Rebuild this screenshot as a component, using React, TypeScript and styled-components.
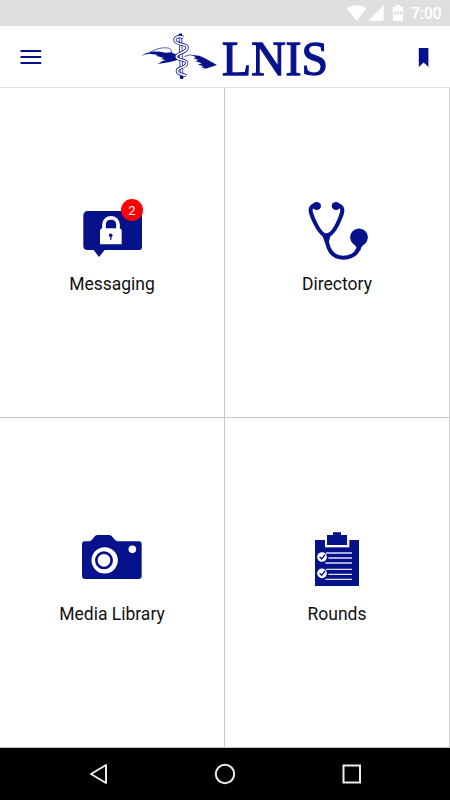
import React from "react";
import styled, { createGlobalStyle } from "styled-components";

const NAVY = "#06118c";

const GlobalStyle = createGlobalStyle`
  * { box-sizing: border-box; }
  body { margin: 0; background: #fff; font-family: Roboto, sans-serif; }
  svg { display: block; }
`;

const Screen = styled.div`
  width: 450px;
  height: 800px;
  display: flex;
  flex-direction: column;
  overflow: hidden;
  background: #fff;
`;

const StatusBar = styled.div`
  height: 26px;
  flex: none;
  display: flex;
  justify-content: flex-end;
  align-items: center;
  padding-right: 9px;
  background: #dfdfdf;
  color: #fff;
`;

const Clock = styled.span`
  font-size: 15.6px;
  font-weight: 500;
  line-height: 26px;
  padding-top: 2px;
  width: 30px;
  white-space: nowrap;
`;

const Header = styled.header`
  height: 62px;
  flex: none;
  display: grid;
  grid-template-columns: 135px 200px 1fr;
  align-items: center;
  border-bottom: 1px solid #dfdfdf;
`;

const IconButton = styled.button<{ $end?: boolean }>`
  height: 60px;
  padding: 0 20px;
  border: 0;
  background: none;
  display: flex;
  align-items: center;
  justify-content: ${(p) => (p.$end ? "flex-end" : "flex-start")};
`;

const Tiles = styled.main`
  height: 660px;
  flex: none;
  display: grid;
  grid-template-columns: 225px 225px;
  grid-template-rows: 330px 330px;
`;

const Tile = styled.div`
  display: flex;
  flex-direction: column;
  align-items: center;
  padding-top: 107px;
  border-right: 1px solid #c8c8c8;
  border-bottom: 1px solid #c8c8c8;
`;

const Label = styled.span`
  margin-top: 7px;
  font-size: 17.5px;
  line-height: 24px;
  color: #111;
`;

const NavBar = styled.nav`
  height: 52px;
  flex: none;
  display: flex;
  justify-content: space-between;
  align-items: center;
  padding: 0 87px;
  background: #000;
`;

const StatusIcons = () => (
  <svg width="66" height="26" viewBox="45 0 198 78" fill="#fff">
    <path d="M50 24Q80 7 110 24L80 62Z" />
    <path d="M161 16V62H114Z" />
    <path d="M189 20H198V15H210V20H219V62H189Z" />
    <path d="M192 34h6v10h-6zM201 34h6v10h-6zM210 34h6v10h-6z" fill="#dfdfdf" />
  </svg>
);

const Logo = () => (
  <svg width="200" height="60" viewBox="135 27 200 60" fill={NAVY}>
    <g transform="translate(135 26) scale(.33333)">
      <path d="M18 90Q32 80 50 77Q68 75 92 80L109 79Q120 84 132 90L126 102Q108 108 92 110L68 114L84 104L92 103L78 98L87 96L62 89L70 87L44 83Q31 84 18 90Z" />
      <path d="M45 79Q74 62 98 66Q111 67 109 80" fill="none" stroke={NAVY} strokeWidth="2" />
      <path d="M148 92Q162 83 180 89" fill="none" stroke={NAVY} strokeWidth="2" />
      <path d="M172 88Q190 86 207 95L246 117L201 132L212 127L197 124L206 121L189 116L200 112L181 105L190 102L175 96L183 94Z" />
      <path d="M136 23L140 158" stroke={NAVY} strokeWidth="10" />
      <path d="M136 28L140 150" stroke="#fff" strokeWidth="5.5" />
      <path d="M145 34C122 27 112 42 126 50C141 58 160 54 156 68C151 81 124 81 124 92C124 104 158 99 155 113C151 127 125 122 127 136C129 146 142 143 154 150" fill="none" stroke={NAVY} strokeWidth="9.5" />
      <path d="M145 34C122 27 112 42 126 50C141 58 160 54 156 68C151 81 124 81 124 92C124 104 158 99 155 113C151 127 125 122 127 136C129 146 142 143 154 150" fill="none" stroke="#fff" strokeWidth="5" />
      <circle cx="141" cy="155" r="4" />
    </g>
    <text x="222" y="75.3" fontFamily="Liberation Serif, serif" fontSize="49" textLength="106" lengthAdjust="spacingAndGlyphs" stroke={NAVY} strokeWidth="1.3">LNIS</text>
  </svg>
);

const MessagingIcon = () => (
  <svg width="70" height="70" viewBox="51 15 210 210" fill={NAVY}>
    <path d="M82 63H236Q246 63 246 73V170Q246 180 236 180H134L117 201L101 180H80Q70 178 70 168V75Q72 64 82 63Z" />
    <path d="M132 118V104C132 77 174 77 174 104V118" fill="none" stroke="#fff" strokeWidth="11" />
    <path d="M125 115H180L185 120V163H120V120Z" fill="#fff" />
    <circle cx="152" cy="136" r="5.5" />
    <path d="M150 136H155L154 150H151Z" />
    <circle cx="216" cy="60" r="33" fill="#f00" />
    <text x="216" y="74" textAnchor="middle" fontFamily="Roboto, sans-serif" fontSize="39" fill="#fff">2</text>
  </svg>
);

const DirectoryIcon = () => (
  <svg width="70" height="70" viewBox="36 15 210 210" fill={NAVY}>
    <g fill="none" stroke={NAVY} strokeWidth="12" strokeLinecap="round">
      <path d="M73 46C58 50 60 65 67 80C82 116 96 136 109 136C123 136 138 116 152 80C160 62 159 50 145 46" />
      <path d="M109 140C112 185 131 203 160 203C187 202 204 190 207 165" />
    </g>
    <ellipse cx="80" cy="48" rx="13" ry="12" />
    <ellipse cx="138" cy="48" rx="13" ry="12" />
    <path d="M95 131L109 138L123 131L116 158H105Z" />
    <circle cx="207" cy="142" r="26.5" />
    <path d="M192 161H222L213 174L211 182H200L201 174Z" />
  </svg>
);

const CameraIcon = () => (
  <svg width="70" height="70" viewBox="81 15 210 210" fill={NAVY}>
    <path d="M105 64H119Q125 63 130 54Q135 45 142 45H178Q185 45 190 54Q196 64 203 64H266Q275 64 275 73V168Q275 177 266 177H105Q96 177 96 168V73Q96 64 105 64Z" />
    <circle cx="164" cy="121" r="39.5" fill="#fff" />
    <circle cx="162" cy="121" r="23" fill="#fff" stroke={NAVY} strokeWidth="8" />
    <circle cx="247" cy="88" r="11.5" fill="#fff" />
  </svg>
);

const Check = ({ y }: { y: number }) => (
  <>
    <circle cx="96" cy={y} r="14.5" fill="#fff" />
    <path d={`M89 ${y}L95 ${y + 6}L105 ${y - 7}`} fill="none" stroke={NAVY} strokeWidth="4" />
  </>
);

const RoundsIcon = () => (
  <svg width="70" height="70" viewBox="36 15 210 210" fill={NAVY}>
    <path d="M75 60H207V198H75Z" />
    <path d="M105 57H178V82H105Z" fill="#fff" />
    <path d="M111 45H129V37H153V45H171V75H111Z" />
    <path d="M108 99H186M115 114H186M106 129H186M108 148H186M115 163H186M106 178H186" stroke="#dfe1f4" strokeWidth="4" />
    <Check y={111} />
    <Check y={160} />
  </svg>
);

const tiles = [
  { label: "Messaging", Icon: MessagingIcon },
  { label: "Directory", Icon: DirectoryIcon },
  { label: "Media Library", Icon: CameraIcon },
  { label: "Rounds", Icon: RoundsIcon },
];

export default function App() {
  return (
    <Screen>
      <GlobalStyle />
      <StatusBar>
        <StatusIcons />
        <Clock>7:00</Clock>
      </StatusBar>
      <Header>
        <IconButton aria-label="Menu">
          <svg width="22" height="16" viewBox="0 0 22 16">
            <path d="M.5 2H21.2M.5 8H21.2M.5 14H21.2" stroke={NAVY} strokeWidth="2" />
          </svg>
        </IconButton>
        <Logo />
        <IconButton $end aria-label="Bookmark">
          <svg width="12" height="20" viewBox="0 0 12 20" fill={NAVY}>
            <path d="M.8 1H10.4V20L5.6 15.5L.8 20Z" />
          </svg>
        </IconButton>
      </Header>
      <Tiles>
        {tiles.map(({ label, Icon }) => (
          <Tile key={label}>
            <Icon />
            <Label>{label}</Label>
          </Tile>
        ))}
      </Tiles>
      <NavBar>
        <svg width="22" height="24" viewBox="0 0 22 24" fill="none" stroke="#eee" strokeWidth="2">
          <path d="M19 3V21L4 12Z" strokeLinejoin="round" />
        </svg>
        <svg width="22" height="22" viewBox="0 0 22 22" fill="none" stroke="#eee" strokeWidth="2">
          <circle cx="11" cy="11" r="9.2" />
        </svg>
        <svg width="22" height="22" viewBox="0 0 22 22" fill="none" stroke="#eee" strokeWidth="2">
          <path d="M2.5 2.5H19V19.5H2.5Z" />
        </svg>
      </NavBar>
    </Screen>
  );
}
